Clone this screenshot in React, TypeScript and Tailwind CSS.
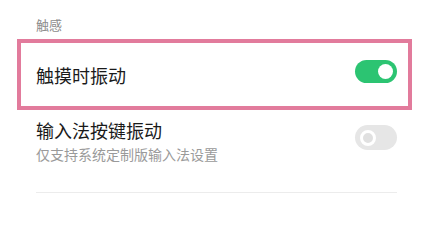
import React from "react";

export default function App() {
  return (
    <div
      className="w-[423px] h-[252px] bg-white overflow-hidden"
      style={{ fontFamily: '"Noto Sans CJK SC", "Noto Sans", sans-serif' }}
    >
      <div className="pl-[36px] pt-[15px] text-[13px] leading-[20px] text-[#8c8c8c]">触感</div>
      <div className="mt-[4px] ml-[17px] w-[395px] h-[71px] border-4 border-[#e27b9c] flex items-center justify-between pl-[15px] pr-[11px]">
        <div className="text-[18px] leading-[24px] text-[#1a1a1a]">触摸时振动</div>
        <div className="w-[42px] h-[23px] rounded-full bg-[#2cc472] flex items-center justify-end pr-[4px] -mt-[6px]">
          <div className="w-[15px] h-[15px] rounded-full bg-white" />
        </div>
      </div>
      <div className="ml-[36px] w-[361px] flex items-start justify-between">
        <div className="flex flex-col">
          <div className="text-[18px] leading-[24px] text-[#1a1a1a] mt-[8px]">输入法按键振动</div>
          <div className="text-[14px] leading-[20px] text-[#9a9a9a] mt-[2px]">仅支持系统定制版输入法设置</div>
        </div>
        <div className="w-[42px] h-[25px] rounded-full bg-[#e6e6e6] flex items-center pl-[5px] mt-[15px]">
          <div className="w-[16px] h-[16px] rounded-full border-[3px] border-white bg-[#e0e0e0]" />
        </div>
      </div>
      <div className="mt-[28px] ml-[36px] w-[361px] h-px bg-[#ececec]" />
    </div>
  );
}
